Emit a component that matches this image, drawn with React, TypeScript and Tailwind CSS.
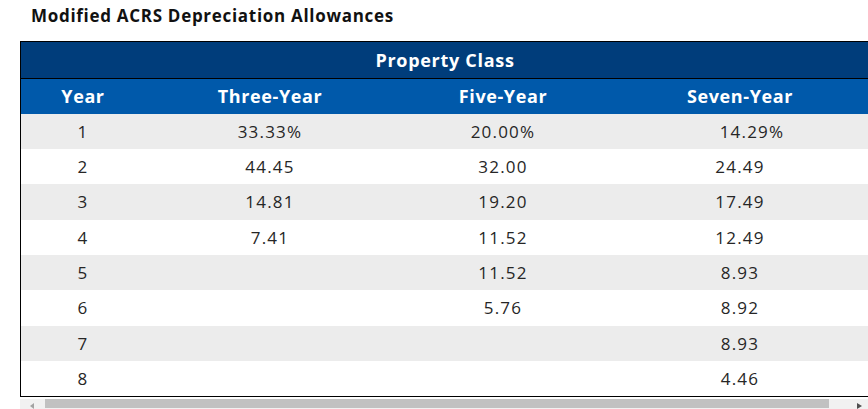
import React from 'react';

const rows: [string, string, string, string][] = [
  ['1', '33.33%', '20.00%', '14.29%'],
  ['2', '44.45', '32.00', '24.49'],
  ['3', '14.81', '19.20', '17.49'],
  ['4', '7.41', '11.52', '12.49'],
  ['5', '', '11.52', '8.93'],
  ['6', '', '5.76', '8.92'],
  ['7', '', '', '8.93'],
  ['8', '', '', '4.46'],
];

const heights = ['h-[35px]', 'h-[35px]', 'h-[36px]', 'h-[35px]', 'h-[35px]', 'h-[36px]', 'h-[35px]', 'h-[35px]'];

const cols = 'grid grid-cols-[124px_250px_216px_270px]';

export default function App() {
  return (
    <div className="w-[868px] h-[409px] overflow-hidden bg-white font-['Open_Sans',sans-serif] text-[#262626]">
      <h3 className="h-[41px] pl-[31px] pt-[3px] text-[17px] font-bold tracking-[0.7px] text-[#111]">
        Modified ACRS Depreciation Allowances
      </h3>
      <div className="ml-[20px] w-[848px] overflow-hidden">
        <div className="w-[861px] border-l border-t border-b border-black">
          <div className="h-[37px] bg-[#003d7b] border-b border-black flex items-center justify-center text-white font-bold text-[18px] pr-[12px] tracking-[0.7px]">
            Property Class
          </div>
          <div className={`${cols} h-[35px] bg-[#0059aa] text-white font-bold text-[18px] tracking-[0.6px]`}>
            <div className="flex items-center justify-center">Year</div>
            <div className="flex items-center justify-center">Three-Year</div>
            <div className="flex items-center justify-center">Five-Year</div>
            <div className="flex items-center justify-center pr-[12px]">Seven-Year</div>
          </div>
          {rows.map((r, i) => (
            <div
              key={r[0]}
              className={`${cols} ${heights[i]} ${i % 2 === 0 ? 'bg-[#ececec]' : 'bg-white'} text-[17px] tracking-[1.2px]`}
            >
              <div className="flex items-center justify-center">{r[0]}</div>
              <div className="flex items-center justify-center">{r[1]}</div>
              <div className="flex items-center justify-center">{r[2]}</div>
              <div className={`flex items-center justify-center ${i === 0 ? 'pl-[12px]' : 'pr-[12px]'}`}>{r[3]}</div>
            </div>
          ))}
        </div>
      </div>
      {/* horizontal scrollbar */}
      <div className="ml-[20px] mt-[2px] w-[848px] h-[15px] bg-[#f1f1f1] flex items-start">
        <div className="w-[25px] h-full flex items-start justify-center pt-[4px]">
          <svg width="5" height="6" viewBox="0 0 5 6">
            <path d="M4 0 L0 3 L4 6 Z" fill="#a3a3a3" />
          </svg>
        </div>
        <div className="w-[784px] h-[9px] bg-[#c1c1c1]" />
        <div className="flex-1 h-full flex items-start justify-end pr-[6px] pt-[4px]">
          <svg width="5" height="6" viewBox="0 0 5 6">
            <path d="M0 0 L5 3 L0 6 Z" fill="#505050" />
          </svg>
        </div>
      </div>
    </div>
  );
}
